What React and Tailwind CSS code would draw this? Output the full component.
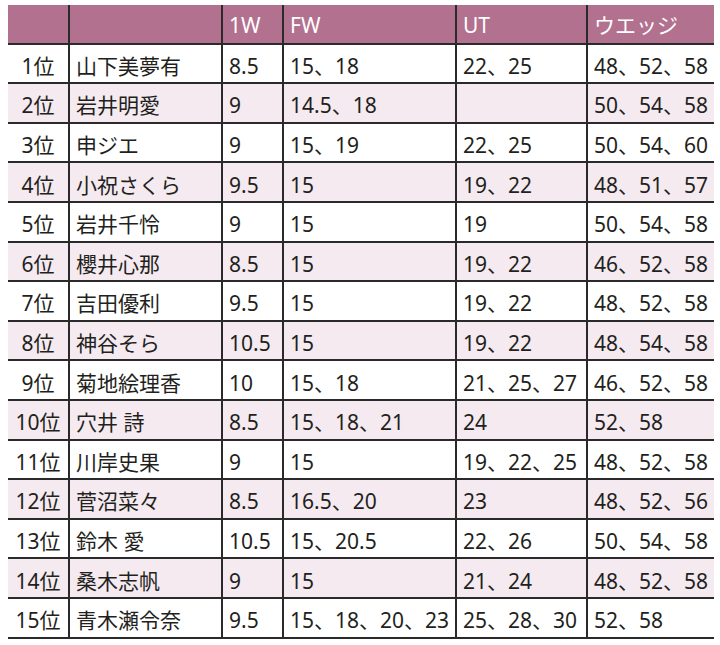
import React from "react";

const rows = [
  ["1位", "山下美夢有", "8.5", "15、18", "22、25", "48、52、58"],
  ["2位", "岩井明愛", "9", "14.5、18", "", "50、54、58"],
  ["3位", "申ジエ", "9", "15、19", "22、25", "50、54、60"],
  ["4位", "小祝さくら", "9.5", "15", "19、22", "48、51、57"],
  ["5位", "岩井千怜", "9", "15", "19", "50、54、58"],
  ["6位", "櫻井心那", "8.5", "15", "19、22", "46、52、58"],
  ["7位", "吉田優利", "9.5", "15", "19、22", "48、52、58"],
  ["8位", "神谷そら", "10.5", "15", "19、22", "48、54、58"],
  ["9位", "菊地絵理香", "10", "15、18", "21、25、27", "46、52、58"],
  ["10位", "穴井 詩", "8.5", "15、18、21", "24", "52、58"],
  ["11位", "川岸史果", "9", "15", "19、22、25", "48、52、58"],
  ["12位", "菅沼菜々", "8.5", "16.5、20", "23", "48、52、56"],
  ["13位", "鈴木 愛", "10.5", "15、20.5", "22、26", "50、54、58"],
  ["14位", "桑木志帆", "9", "15", "21、24", "48、52、58"],
  ["15位", "青木瀬令奈", "9.5", "15、18、20、23", "25、28、30", "52、58"],
];

const widths = ["w-[60px]", "w-[153px]", "w-[61px]", "w-[173px]", "w-[131px]", "w-[128px]"];

function Row({ cells, head, shade }) {
  const bg = head ? "bg-[#b2718f] text-white" : shade ? "bg-[#f4eaf0] text-[#231f20]" : "bg-white text-[#231f20]";
  return (
    <div className={`flex h-[39.6px] border-b-2 border-[#2a2a2a] ${bg}`}>
      {cells.map((c, i) => (
        <div
          key={i}
          className={`${widths[i]} shrink-0 flex items-center whitespace-nowrap ${
            i === 0 ? "justify-center" : "border-l-2 border-[#2a2a2a] pl-[6px]"
          } ${head ? "pt-[4px]" : "pt-[6px]"}`}
        >
          {c}
        </div>
      ))}
    </div>
  );
}

export default function App() {
  return (
    <div
      className="w-[720px] h-[645px] bg-white pt-[5px] pl-[8px] text-[21px] leading-none"
      style={{ fontFamily: '"Noto Sans", "Noto Sans CJK JP", sans-serif' }}
    >
      <div className="w-[706px]">
        <Row head cells={["", "", "1W", "FW", "UT", "ウエッジ"]} />
        {rows.map((r, i) => (
          <Row key={i} cells={r} shade={i % 2 === 1} />
        ))}
      </div>
    </div>
  );
}
